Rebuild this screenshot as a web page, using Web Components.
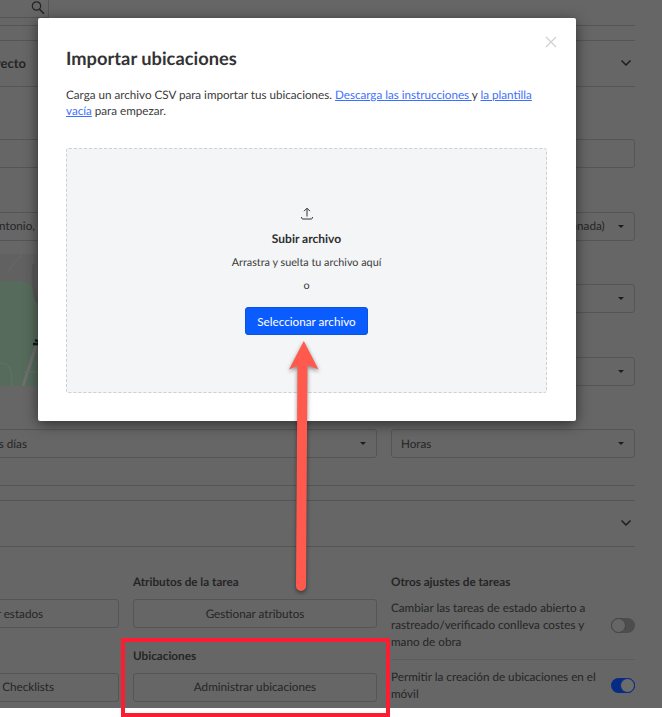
<!DOCTYPE html>
<html lang="es">
<head>
<meta charset="utf-8">
<title>Importar ubicaciones</title>
<style>
    html, body {
        margin: 0;
        height: 717px;
        overflow: hidden;
        background: #fff;
        font-family: Lato, "Liberation Sans", sans-serif;
        text-rendering: geometricPrecision;
    }
</style>
</head>
<body>
<settings-page>
    <top-search slot="top"></top-search>
    <section-header slot="first" title-text="Ajustes del proyecto" style="--title-pad:33px"></section-header>

    <form-select slot="left" value="San Antonio," style="--pad:94px"></form-select>
    <site-map slot="left"></site-map>
    <form-select slot="left" value="Todos los días" style="--pad:80px;margin-top:43px"></form-select>

    <form-select slot="right" value="(US y Canada)"  style="--pad:142px"></form-select>
    <form-select slot="right"></form-select>
    <form-select slot="right"></form-select>
    <form-select slot="right" value="Horas"></form-select>

    <section-header slot="second"></section-header>

    <action-block slot="col1" heading="Estados" label="Gestionar estados"></action-block>
    <action-block slot="col1" heading="Checklists" label="Administrar Checklists"></action-block>
    <action-block slot="col2" heading="Atributos de la tarea" label="Gestionar atributos"></action-block>
    <action-block slot="col2" heading="Ubicaciones" label="Administrar ubicaciones"></action-block>

    <div slot="col3" class="col-title">Otros ajustes de tareas</div>
    <toggle-row slot="col3">Cambiar las tareas de estado abierto a rastreado/verificado conlleva costes y mano de obra</toggle-row>
    <toggle-row slot="col3" on>Permitir la creación de ubicaciones en el móvil</toggle-row>
</settings-page>

<import-modal heading="Importar ubicaciones">
    Carga un archivo CSV para importar tus ubicaciones. <a href="#">Descarga las instrucciones </a>y <a href="#">la plantilla vacía</a> para empezar.
</import-modal>
<note-box></note-box>
<note-arrow></note-arrow>

<script>
const settingsTemplate = document.createElement('template');
settingsTemplate.innerHTML = `
    <style>
        :host {
            display: block;
            height: 708px;
            overflow: hidden;
            background: #666;
            color: #252525;
        }
        .wrap {
            margin-left: -125px;
            width: 760px;
        }
        .strip {
            height: 14px;
            border-top: 1px solid #555;
            margin-top: 7px;
        }
        .form {
            display: flex;
            gap: 14px;
            margin-top: 52px;
        }
        .left {
            width: 502px;
            display: flex;
            flex-direction: column;
        }
        .right {
            width: 245px;
            display: flex;
            flex-direction: column;
            gap: 43.5px;
        }
        .input {
            height: 29px;
            box-sizing: border-box;
            border: 1px solid #555;
            border-radius: 3px;
        }
        .left .input {
            margin-bottom: 43.5px;
        }
        .strip.low {
            margin-top: 27px;
        }
        .tasks {
            display: grid;
            grid-template-columns: 244px 244px 244px;
            column-gap: 14px;
            margin-top: 25px;
        }
        ::slotted(.col-title) {
            font-size: 11.7px;
            font-weight: 700;
            line-height: 20px;
        }
    </style>
    <slot name="top"></slot>
    <div class="wrap">
        <div class="strip"></div>
        <slot name="first"></slot>
        <div class="form">
            <div class="left">
                <div class="input"></div>
                <slot name="left"></slot>
            </div>
            <div class="right">
                <div class="input"></div>
                <slot name="right"></slot>
            </div>
        </div>
        <div class="strip low"></div>
        <slot name="second"></slot>
        <div class="tasks">
            <div><slot name="col1"></slot></div>
            <div><slot name="col2"></slot></div>
            <div><slot name="col3"></slot></div>
        </div>
    </div>
`;
class SettingsPage extends HTMLElement {
    constructor() {
        super();
        this.attachShadow({ mode: 'open' });
        this.shadowRoot.append(settingsTemplate.content.cloneNode(true));
    }
}

const searchTemplate = document.createElement('template');
searchTemplate.innerHTML = `
    <style>
        :host {
            display: flex;
            justify-content: flex-end;
            width: 49px;
            height: 18px;
            box-sizing: border-box;
            border-right: 1px solid #555;
            border-bottom: 1px solid #555;
        }
        svg {
            margin: 0 3px 0 0;
        }
    </style>
    <svg width="14" height="16" viewBox="0 0 14 16" fill="none" stroke="#252525" stroke-width="1.2">
        <circle cx="5.5" cy="6" r="4.2"></circle>
        <path d="M8.5 9.2 13 13.8" stroke-width="1.5"></path>
    </svg>
`;
class TopSearch extends HTMLElement {
    constructor() {
        super();
        this.attachShadow({ mode: 'open' });
        this.shadowRoot.append(searchTemplate.content.cloneNode(true));
    }
}

const headerTemplate = document.createElement('template');
headerTemplate.innerHTML = `
    <style>
        :host {
            display: flex;
            align-items: center;
            justify-content: space-between;
            height: 47px;
            box-sizing: border-box;
            border-top: 1px solid #555;
            border-bottom: 1px solid #555;
            padding: 0 3px 2px var(--title-pad, 12px);
            font-size: 13px;
            font-weight: 700;
        }
    </style>
    <span class="title"></span>
    <svg width="12" height="8" viewBox="0 0 12 8" fill="none" stroke="#1c1c1c" stroke-width="1.5">
        <path d="M1.5 1.5 6 6l4.5-4.5"></path>
    </svg>
`;
class SectionHeader extends HTMLElement {
    constructor() {
        super();
        this.attachShadow({ mode: 'open' });
        this.shadowRoot.append(headerTemplate.content.cloneNode(true));
    }
    connectedCallback() {
        this.shadowRoot.querySelector('.title').textContent = this.getAttribute('title-text') || '';
    }
}

const selectTemplate = document.createElement('template');
selectTemplate.innerHTML = `
    <style>
        :host {
            display: flex;
            align-items: center;
            justify-content: space-between;
            height: 29px;
            flex: none;
            box-sizing: border-box;
            border: 1px solid #555;
            border-radius: 3px;
            padding: 0 10px 0 var(--pad, 9px);
            font-size: 11.7px;
        }
        i {
            width: 0;
            height: 0;
            border-left: 3.5px solid transparent;
            border-right: 3.5px solid transparent;
            border-top: 3.5px solid #1c1c1c;
        }
    </style>
    <span class="value"></span><i></i>
`;
class FormSelect extends HTMLElement {
    constructor() {
        super();
        this.attachShadow({ mode: 'open' });
        this.shadowRoot.append(selectTemplate.content.cloneNode(true));
    }
    connectedCallback() {
        this.shadowRoot.querySelector('.value').textContent = this.getAttribute('value') || '';
    }
}

const mapTemplate = document.createElement('template');
mapTemplate.innerHTML = `
    <style>
        :host {
            display: block;
            height: 132px;
            margin-top: 13.5px;
            flex: none;
            background: #616161;
        }
        svg {
            display: block;
        }
    </style>
    <svg width="502" height="132" viewBox="-125 0 502 132" fill="none">
        <path d="M-125 132V27H22C32 27 36 36 37 50L60 60V132z" fill="#566b5c"></path>
        <path d="M9 17C12 9 18 6 22 0" stroke="#6a6a6a" stroke-width="1"></path>
        <path d="M34 10C32 24 33 36 37 48" stroke="#5a5a5a" stroke-width="3"></path>
        <path d="M23 132 36 92" stroke="#6f6f6f" stroke-width="3"></path>
        <path d="M0 109c10 0 12 6 12 23M24 118h20" stroke="#61756a" stroke-width="1"></path>
        <path d="M33 90h8M35 86l5 2" stroke="#151515" stroke-width="2.4"></path>
    </svg>
`;
class SiteMap extends HTMLElement {
    constructor() {
        super();
        this.attachShadow({ mode: 'open' });
        this.shadowRoot.append(mapTemplate.content.cloneNode(true));
    }
}

const actionTemplate = document.createElement('template');
actionTemplate.innerHTML = `
    <style>
        :host {
            display: block;
            margin-bottom: 17.5px;
        }
        h4 {
            margin: 0 0 7px;
            font-size: 11.7px;
            font-weight: 700;
            line-height: 20px;
        }
        div {
            height: 29px;
            box-sizing: border-box;
            border: 1px solid #555;
            border-radius: 3px;
            display: flex;
            align-items: center;
            justify-content: center;
            font-size: 11.7px;
        }
    </style>
    <h4></h4>
    <div></div>
`;
class ActionBlock extends HTMLElement {
    constructor() {
        super();
        this.attachShadow({ mode: 'open' });
        this.shadowRoot.append(actionTemplate.content.cloneNode(true));
    }
    connectedCallback() {
        this.shadowRoot.querySelector('h4').textContent = this.getAttribute('heading');
        this.shadowRoot.querySelector('div').textContent = this.getAttribute('label');
    }
}

const toggleTemplate = document.createElement('template');
toggleTemplate.innerHTML = `
    <style>
        :host {
            display: flex;
            align-items: center;
            justify-content: space-between;
            gap: 14px;
            font-size: 11.7px;
            line-height: 17px;
            padding: 8px 0 8px;
            border-bottom: 1px solid #5c5c5c;
        }
        :host(:last-child) {
            border-bottom: 0;
            padding-top: 9px;
            line-height: 16.5px;
        }
        .track {
            flex: none;
            width: 24px;
            height: 15px;
            box-sizing: border-box;
            border-radius: 8px;
            background: #4d4d4d;
            display: flex;
        }
        .knob {
            width: 15px;
            height: 15px;
            box-sizing: border-box;
            border-radius: 50%;
            background: #666;
            border: 1px solid #444;
        }
        :host([on]) .track {
            background: #062b82;
            justify-content: flex-end;
        }
        :host([on]) .knob {
            border-color: #062b82;
            background: #6c6c6c;
        }
    </style>
    <span><slot></slot></span>
    <div class="track"><div class="knob"></div></div>
`;
class ToggleRow extends HTMLElement {
    constructor() {
        super();
        this.attachShadow({ mode: 'open' });
        this.shadowRoot.append(toggleTemplate.content.cloneNode(true));
    }
}

const modalTemplate = document.createElement('template');
modalTemplate.innerHTML = `
    <style>
        :host {
            position: absolute;
            left: 38px;
            top: 18px;
            width: 538px;
            height: 403px;
            box-sizing: border-box;
            padding: 28px 29px 28px 28px;
            background: #fff;
            border-radius: 2px;
            box-shadow: 0 3px 14px rgba(0, 0, 0, .55);
            color: #3b3b3b;
            display: flex;
            flex-direction: column;
        }
        h2 {
            margin: 0;
            font-size: 18.3px;
            font-weight: 700;
            line-height: 24px;
            color: #333;
        }
        p {
            margin: 18px 0 0;
            font-size: 11.65px;
            line-height: 16px;
        }
        ::slotted(a) {
            color: #3d6fff;
        }
        .close {
            position: absolute;
            right: 19px;
            top: 18px;
            width: 12px;
            height: 12px;
        }
        .drop {
            flex: 1;
            margin-top: 28px;
            box-sizing: border-box;
            background: #f4f5f7;
            border: 1px dashed #cfd0d3;
            border-radius: 3px;
            display: flex;
            flex-direction: column;
            align-items: center;
            padding-top: 58px;
            font-size: 10.8px;
        }
        .drop svg {
            display: block;
        }
        strong {
            margin-top: 11px;
            font-size: 12px;
            line-height: 16px;
            color: #2f2f2f;
        }
        strong + span {
            margin-top: 8px;
        }
        span {
            margin-top: 7px;
            line-height: 16px;
        }
        button {
            margin-top: 13px;
            width: 123px;
            height: 28px;
            padding: 0;
            border: 1px solid #0a52e0;
            border-radius: 3px;
            background: #0b5cff;
            color: #fff;
            font: 11.7px Lato, "Liberation Sans", sans-serif;
        }
    </style>
    <h2></h2>
    <svg class="close" viewBox="0 0 12 12" fill="none" stroke="#cfcfcf" stroke-width="1.2">
        <path d="M1 1l10 10M11 1 1 11"></path>
    </svg>
    <p><slot></slot></p>
    <div class="drop">
        <svg width="12" height="13" viewBox="0 0 12 13" fill="none" stroke="#333" stroke-width="1">
            <path d="M6 9.5V1.500M3 4.200 6 1.200l3 3M.5 10c0 1.600.6 2 1.500 2h8c.9 0 1.500-.4 1.500-2"></path>
        </svg>
        <strong>Subir archivo</strong>
        <span>Arrastra y suelta tu archivo aquí</span>
        <span>o</span>
        <button type="button">Seleccionar archivo</button>
    </div>
`;
class ImportModal extends HTMLElement {
    constructor() {
        super();
        this.attachShadow({ mode: 'open' });
        this.shadowRoot.append(modalTemplate.content.cloneNode(true));
    }
    connectedCallback() {
        this.shadowRoot.querySelector('h2').textContent = this.getAttribute('heading');
    }
}

const boxTemplate = document.createElement('template');
boxTemplate.innerHTML = `
    <style>
        :host {
            position: absolute;
            left: 121px;
            top: 638px;
            width: 269px;
            height: 79px;
            box-sizing: border-box;
            border: 4px solid #fb1e33;
        }
    </style>
`;
class NoteBox extends HTMLElement {
    constructor() {
        super();
        this.attachShadow({ mode: 'open' });
        this.shadowRoot.append(boxTemplate.content.cloneNode(true));
    }
}

const arrowTemplate = document.createElement('template');
arrowTemplate.innerHTML = `
    <style>
        :host {
            position: absolute;
            left: 270px;
            top: 330px;
            width: 70px;
            height: 280px;
        }
        svg {
            display: block;
            filter: drop-shadow(0 2px 2px rgba(0, 0, 0, .45));
        }
    </style>
    <svg width="70" height="280" viewBox="270 330 70 280">
        <path d="M302.5 360 301 586" stroke="#ff5a4d" stroke-width="10" stroke-linecap="round" fill="none"></path>
        <path d="M303.800 341 318.500 369.500 303 363.500 289 369.500z" fill="#ff5a4d"></path>
    </svg>
`;
class NoteArrow extends HTMLElement {
    constructor() {
        super();
        this.attachShadow({ mode: 'open' });
        this.shadowRoot.append(arrowTemplate.content.cloneNode(true));
    }
}

window.customElements.define('settings-page', SettingsPage);
window.customElements.define('top-search', TopSearch);
window.customElements.define('section-header', SectionHeader);
window.customElements.define('form-select', FormSelect);
window.customElements.define('site-map', SiteMap);
window.customElements.define('action-block', ActionBlock);
window.customElements.define('toggle-row', ToggleRow);
window.customElements.define('import-modal', ImportModal);
window.customElements.define('note-box', NoteBox);
window.customElements.define('note-arrow', NoteArrow);
</script>
</body>
</html>
